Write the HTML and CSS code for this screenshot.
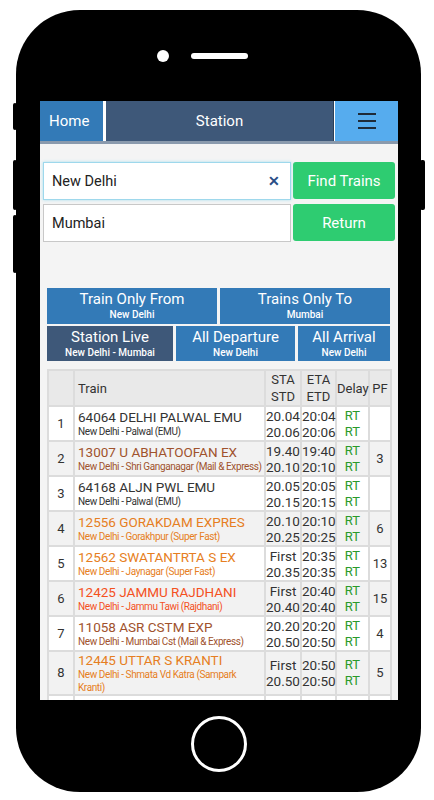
FILE: index.html
```html
<!DOCTYPE html>
<html lang="en">

<head>
    <meta charset="UTF-8">
    <meta name="viewport" content="width=device-width, initial-scale=1.0">
    <title>Station - Live Trains</title>
    <link rel="stylesheet" href="styles.css">
</head>

<body>
    <div class="phone">
        <span class="key key-1"></span>
        <span class="key key-2"></span>
        <span class="key key-3"></span>
        <span class="key key-power"></span>

        <div class="bezel-top">
            <span class="camera"></span>
            <span class="speaker"></span>
        </div>

        <div class="screen">
            <div class="topbar">
                <a class="nav-home">Home</a>
                <div class="nav-title">Station</div>
                <a class="nav-menu">
                    <span></span><span></span><span></span>
                </a>
            </div>

            <form class="search">
                <div class="field focused">
                    <input type="text" value="New Delhi">
                    <span class="clear">&#x2715;</span>
                </div>
                <button type="button" class="btn-green">Find Trains</button>
                <div class="field">
                    <input type="text" value="Mumbai">
                </div>
                <button type="button" class="btn-green">Return</button>
            </form>

            <div class="tabs">
                <div class="tab-row two">
                    <a class="tab">Train Only From<small>New Delhi</small></a>
                    <a class="tab">Trains Only To<small>Mumbai</small></a>
                </div>
                <div class="tab-row three">
                    <a class="tab active">Station Live<small>New Delhi - Mumbai</small></a>
                    <a class="tab">All Departure<small>New Delhi</small></a>
                    <a class="tab">All Arrival<small>New Delhi</small></a>
                </div>
            </div>

            <table class="trains">
                <colgroup>
                    <col class="w-no">
                    <col class="w-train">
                    <col class="w-sta">
                    <col class="w-eta">
                    <col class="w-delay">
                    <col class="w-pf">
                </colgroup>
                <thead>
                    <tr>
                        <th></th>
                        <th class="c-train">Train</th>
                        <th>STA<br>STD</th>
                        <th>ETA<br>ETD</th>
                        <th>Delay</th>
                        <th>PF</th>
                    </tr>
                </thead>
                <tbody>
                    <tr>
                        <td>1</td>
                        <td class="c-train"><b>64064 DELHI PALWAL EMU</b><i>New Delhi - Palwal (EMU)</i></td>
                        <td class="c-time">20.04<br>20.06</td>
                        <td class="c-time">20:04<br>20:06</td>
                        <td class="c-delay">RT<br>RT</td>
                        <td></td>
                    </tr>
                    <tr class="mail">
                        <td>2</td>
                        <td class="c-train"><b>13007 U ABHATOOFAN EX</b><i>New Delhi - Shri Ganganagar (Mail &amp; Express)</i></td>
                        <td class="c-time">19.40<br>20.10</td>
                        <td class="c-time">19:40<br>20:10</td>
                        <td class="c-delay">RT<br>RT</td>
                        <td>3</td>
                    </tr>
                    <tr>
                        <td>3</td>
                        <td class="c-train"><b>64168 ALJN PWL EMU</b><i>New Delhi - Palwal (EMU)</i></td>
                        <td class="c-time">20.05<br>20.15</td>
                        <td class="c-time">20:05<br>20:15</td>
                        <td class="c-delay">RT<br>RT</td>
                        <td></td>
                    </tr>
                    <tr class="fast">
                        <td>4</td>
                        <td class="c-train"><b>12556 GORAKDAM EXPRES</b><i>New Delhi - Gorakhpur (Super Fast)</i></td>
                        <td class="c-time">20.10<br>20.25</td>
                        <td class="c-time">20:10<br>20:25</td>
                        <td class="c-delay">RT<br>RT</td>
                        <td>6</td>
                    </tr>
                    <tr class="fast">
                        <td>5</td>
                        <td class="c-train"><b>12562 SWATANTRTA S EX</b><i>New Delhi - Jaynagar (Super Fast)</i></td>
                        <td class="c-time">First<br>20.35</td>
                        <td class="c-time">20:35<br>20:35</td>
                        <td class="c-delay">RT<br>RT</td>
                        <td>13</td>
                    </tr>
                    <tr class="rajdhani">
                        <td>6</td>
                        <td class="c-train"><b>12425 JAMMU RAJDHANI</b><i>New Delhi - Jammu Tawi (Rajdhani)</i></td>
                        <td class="c-time">First<br>20.40</td>
                        <td class="c-time">20:40<br>20:40</td>
                        <td class="c-delay">RT<br>RT</td>
                        <td>15</td>
                    </tr>
                    <tr class="mail">
                        <td>7</td>
                        <td class="c-train"><b>11058 ASR CSTM EXP</b><i>New Delhi - Mumbai Cst (Mail &amp; Express)</i></td>
                        <td class="c-time">20.20<br>20.50</td>
                        <td class="c-time">20:20<br>20:50</td>
                        <td class="c-delay">RT<br>RT</td>
                        <td>4</td>
                    </tr>
                    <tr class="fast">
                        <td>8</td>
                        <td class="c-train"><b>12445 UTTAR S KRANTI</b><i>New Delhi - Shmata Vd Katra (Sampark<br>Kranti)</i></td>
                        <td class="c-time">First<br>20.50</td>
                        <td class="c-time">20:50<br>20:50</td>
                        <td class="c-delay">RT<br>RT</td>
                        <td>5</td>
                    </tr>
                    <tr>
                        <td>9</td>
                        <td class="c-train"><b>12903 GOLDEN TEMPLE M</b><i>New Delhi - Amritsar (Mail &amp; Express)</i></td>
                        <td class="c-time">20.50<br>21.05</td>
                        <td class="c-time">20:50<br>21:05</td>
                        <td class="c-delay">RT<br>RT</td>
                        <td>2</td>
                    </tr>
                </tbody>
            </table>
        </div>

        <div class="bezel-bottom">
            <span class="home-key"></span>
        </div>
    </div>
</body>

</html>
```

FILE: styles.css
```css
* {
    margin: 0;
    padding: 0;
    box-sizing: border-box;
}

body {
    font-family: Roboto, "Liberation Sans", sans-serif;
    background: #fff;
    width: 434px;
    height: 800px;
    overflow: hidden;
}

a {
    text-decoration: none;
    color: inherit;
}

/* phone frame */

.phone {
    position: relative;
    margin: 10px 0 0 16px;
    width: 405px;
    height: 782px;
    background: #000;
    border-radius: 64px;
    padding: 0 23px 0 24px;
    display: flex;
    flex-direction: column;
}

.key {
    position: absolute;
    background: #000;
    border-radius: 2px;
}

.key-1 {
    left: -3px;
    top: 93px;
    width: 4px;
    height: 27px;
}

.key-2 {
    left: -3px;
    top: 150px;
    width: 4px;
    height: 50px;
}

.key-3 {
    left: -3px;
    top: 205px;
    width: 4px;
    height: 58px;
}

.key-power {
    right: -4px;
    top: 150px;
    width: 5px;
    height: 50px;
}

.bezel-top {
    height: 91px;
    display: flex;
    justify-content: center;
    align-items: center;
    gap: 22px;
    padding: 0 34px 0 0;
}

.camera {
    width: 12px;
    height: 12px;
    border-radius: 50%;
    background: #fff;
}

.speaker {
    width: 57px;
    height: 6px;
    border-radius: 3px;
    background: #fff;
}

.bezel-bottom {
    flex: 1;
    display: flex;
    justify-content: center;
    align-items: center;
    padding-bottom: 4px;
}

.home-key {
    width: 56px;
    height: 56px;
    border: 3px solid #fff;
    border-radius: 50%;
}

/* screen */

.screen {
    height: 599px;
    background: #f4f4f4;
    overflow: hidden;
}

.topbar {
    display: grid;
    grid-template-columns: 63px 1fr 63px;
    gap: 3px;
    height: 43px;
    background: #fff;
    border-bottom: 3px solid #8a9aad;
    color: #fff;
    font-size: 15px;
}

.topbar > * {
    display: flex;
    align-items: center;
}

.nav-home {
    background: #337ab7;
    padding-left: 9px;
}

.nav-title {
    background: #3e5879;
    justify-content: center;
    border-right: 1px solid #2c3f57;
    margin-right: -2px;
}

.nav-menu {
    background: #56acee;
    flex-direction: column;
    justify-content: center;
    gap: 5px;
}

.nav-menu span {
    width: 18px;
    height: 2px;
    background: #1f2b38;
}

/* search */

.search {
    display: grid;
    grid-template-columns: 248px 102px;
    gap: 4px 2px;
    padding: 18px 3px 0;
}

.field {
    position: relative;
    height: 38px;
    background: #fff;
    border: 1px solid #c8c8c8;
}

.field.focused {
    border-color: #9ed8ec;
    box-shadow: 0 0 3px #a9e0f0;
}

.field input {
    width: 100%;
    height: 100%;
    border: 0;
    outline: none;
    background: transparent;
    padding: 0 8px;
    font-family: inherit;
    font-size: 14.5px;
    color: #222;
}

.clear {
    position: absolute;
    right: 10px;
    top: 10px;
    font-size: 14px;
    font-weight: bold;
    color: #2a4d86;
}

.btn-green {
    height: 37px;
    border: 0;
    border-radius: 3px;
    background: #2ecc71;
    color: #fff;
    font-family: inherit;
    font-size: 15px;
}

/* tabs */

.tabs {
    margin: 46px 8px 0 7px;
    display: flex;
    flex-direction: column;
    gap: 2px;
}

.tab-row {
    display: grid;
    gap: 3px;
}

.tab-row.two {
    grid-template-columns: 1fr 1fr;
}

.tab-row.three {
    grid-template-columns: 126px 119px 1fr;
}

.tab {
    height: 36px;
    background: #337ab7;
    color: #fff;
    font-size: 15px;
    line-height: 18px;
    text-align: center;
    padding-top: 2px;
}

.tab small {
    display: block;
    font-size: 10px;
    line-height: 13px;
    font-weight: 500;
}

.tab.active {
    background: #3e5879;
}

.tab-row.three .tab {
    height: 35px;
}

/* table */

.trains {
    margin: 8px 0 0 7px;
    width: 343px;
    border-collapse: collapse;
    table-layout: fixed;
    background: #fff;
    font-size: 13px;
    color: #333;
}

.w-no { width: 26px; }
.w-train { width: 191px; }
.w-sta { width: 36px; }
.w-eta { width: 35px; }
.w-delay { width: 33px; }
.w-pf { width: 22px; }

.trains th,
.trains td {
    border: 2px solid #dcdcdc;
    padding: 0;
    font-weight: normal;
    text-align: center;
    white-space: nowrap;
}

.trains th {
    background: #e9e9e9;
    height: 36px;
    line-height: 17px;
}

.trains td {
    height: 35px;
    line-height: 16px;
    vertical-align: middle;
}

.trains tbody tr:nth-child(even) td {
    background: #f2f2f2;
}

.trains .c-train {
    text-align: left;
    padding-left: 3px;
    white-space: normal;
}

.c-time {
    font-size: 13.5px;
}

.c-delay {
    color: #2a9a2a;
}

.c-train b {
    display: block;
    font-weight: normal;
    font-size: 13.5px;
    line-height: 16px;
}

.c-train i {
    display: block;
    font-style: normal;
    font-size: 10px;
    line-height: 13px;
    letter-spacing: -0.4px;
}

.mail .c-train {
    color: #a0522d;
}

.fast .c-train {
    color: #e67e22;
}

.rajdhani .c-train {
    color: #f4511e;
}
```
